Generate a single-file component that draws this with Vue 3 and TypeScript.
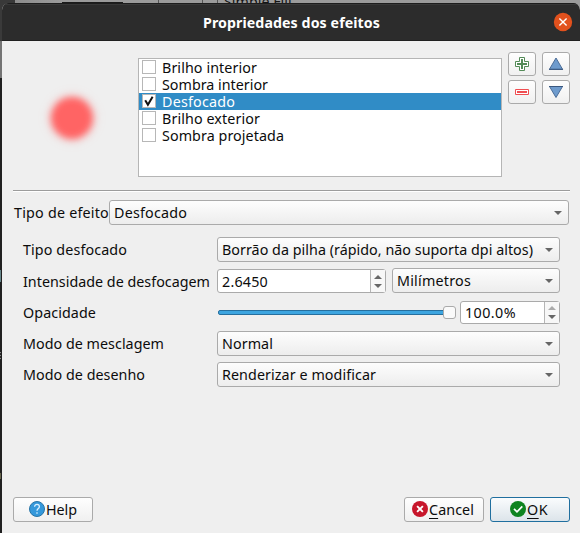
<script setup lang="ts">
import { ref, type Directive } from 'vue'

interface Effect {
  name: string
  width: number
  enabled: boolean
}

const effects = ref<Effect[]>([
  { name: 'Brilho interior', width: 95, enabled: false },
  { name: 'Sombra interior', width: 106, enabled: false },
  { name: 'Desfocado', width: 73, enabled: true },
  { name: 'Brilho exterior', width: 98, enabled: false },
  { name: 'Sombra projetada', width: 122, enabled: false },
])
const selected = ref(2)

// Tracks a label so that it spans the given number of pixels.
const vFit: Directive<HTMLElement, number> = {
  mounted(el, { value }) {
    const natural = el.getBoundingClientRect().width
    const count = (el.textContent ?? '').trim().length
    el.style.letterSpacing = `${(value - natural) / count}px`
  },
}
</script>

<template>
  <div class="desktop">
    <div class="behind-top">
      <i class="tool"></i><i class="bar"></i><i class="sep s1"></i><i class="sep s2"></i><i class="sep s3"></i>
      <span class="behind-text">Simple Fill</span>
    </div>
    <div class="behind-left"><i class="patch p1"></i><i class="patch p2"></i><i class="patch p3"></i></div>

    <div class="dialog">
      <header class="titlebar">
        <span v-fit="177" class="title">Propriedades dos efeitos</span>
        <svg class="close" width="20" height="20" viewBox="0 0 20 20">
          <circle cx="10" cy="10" r="9.2" fill="#e2511d" />
          <path d="M6.4 6.4l7.2 7.2M13.6 6.4l-7.2 7.2" stroke="#fff" stroke-width="1.4" />
        </svg>
      </header>

      <main class="content">
        <section class="top">
          <div class="preview"><div class="dot"></div></div>
          <ul class="list">
            <li v-for="(e, i) in effects" :key="e.name" :class="{ selected: i === selected }" @click="selected = i">
              <span class="check">
                <svg v-if="e.enabled" width="12" height="12" viewBox="0 0 12 12">
                  <path d="M2.2 5.2L4.9 9.8L9.6 1.8" fill="none" stroke="#111" stroke-width="2" />
                </svg>
              </span>
              <span v-fit="e.width">{{ e.name }}</span>
            </li>
          </ul>
          <div class="tools">
            <button class="btn">
              <svg width="16" height="16" viewBox="0 0 16 16">
                <path d="M5.5 1.5h5v4h4v5h-4v4h-5v-4h-4v-5h4z" fill="#fff" stroke="#538b57" />
                <path d="M7 3h2v4h4v2H9v4H7V9H3V7h4z" fill="#538b57" />
              </svg>
            </button>
            <button class="btn">
              <svg width="16" height="16" viewBox="0 0 16 16">
                <path d="M8 2L14.5 13.2H1.5z" fill="#6e9bcd" stroke="#4b6d98" />
                <path d="M1 13.4h14" stroke="#39577f" />
              </svg>
            </button>
            <button class="btn">
              <svg width="16" height="16" viewBox="0 0 16 16">
                <path d="M1.5 5.5h13v5h-13z" fill="#fff" stroke="#f04e52" />
                <path d="M3 7h10v2H3z" fill="#f04e52" />
              </svg>
            </button>
            <button class="btn">
              <svg width="16" height="16" viewBox="0 0 16 16">
                <path d="M8 13.5L1.5 2.5H14.5z" fill="#6e9bcd" stroke="#4b6d98" />
                <path d="M1 2.5h14" stroke="#39577f" />
              </svg>
            </button>
          </div>
        </section>

        <div class="rule"></div>

        <div class="type-row">
          <div class="type-label"><span v-fit="95">Tipo de efeito</span></div>
          <div class="combo"><span v-fit="73">Desfocado</span><i class="arrow"></i></div>
        </div>

        <section class="form">
          <div class="row r1">
            <label><span v-fit="104">Tipo desfocado</span></label>
            <div class="combo"><span v-fit="311">Borrão da pilha (rápido, não suporta dpi altos)</span><i class="arrow"></i></div>
          </div>
          <div class="row r2">
            <label><span v-fit="187">Intensidade de desfocagem</span></label>
            <div class="spin wide">
              <span v-fit="46">2.6450</span>
              <div class="steps"><i class="up"></i><i class="down"></i></div>
            </div>
            <div class="combo"><span v-fit="74">Milímetros</span><i class="arrow"></i></div>
          </div>
          <div class="row r3">
            <label><span v-fit="73">Opacidade</span></label>
            <div class="slider"><div class="track"></div><div class="handle"></div></div>
            <div class="spin small">
              <span v-fit="51">100.0%</span>
              <div class="steps"><i class="up off"></i><i class="down"></i></div>
            </div>
          </div>
          <div class="row r4">
            <label><span v-fit="141">Modo de mesclagem</span></label>
            <div class="combo"><span v-fit="51">Normal</span><i class="arrow"></i></div>
          </div>
          <div class="row r5">
            <label><span v-fit="122">Modo de desenho</span></label>
            <div class="combo"><span v-fit="154">Renderizar e modificar</span><i class="arrow"></i></div>
          </div>
        </section>

        <footer class="footer">
          <button class="btn text help">
            <svg width="16" height="16" viewBox="0 0 16 16">
              <circle cx="8" cy="8" r="7.5" fill="#3498db" stroke="#2874a6" />
              <path d="M5.6 5.8C5.6 2.6 10.4 2.8 10.4 5.7C10.4 7.5 8 7.5 8 9.8M8 11.2v1.6" fill="none" stroke="#d9f0ff" stroke-width="1.3" />
            </svg>
            <span v-fit="31">Help</span>
          </button>
          <span class="grow"></span>
          <button class="btn text cancel">
            <svg width="16" height="16" viewBox="0 0 16 16">
              <circle cx="8" cy="8" r="8" fill="#c7162b" />
              <path d="M5.1 5.1l5.8 5.8M10.9 5.1l-5.8 5.8" stroke="#fff" stroke-width="1.9" />
            </svg>
            <span v-fit="45"><u>C</u>ancel</span>
          </button>
          <button class="btn text ok">
            <svg width="16" height="16" viewBox="0 0 16 16">
              <circle cx="8" cy="8" r="8" fill="#0e8420" />
              <path d="M4 7.8l3 3L12.3 5.4" fill="none" stroke="#fff" stroke-width="1.7" />
            </svg>
            <span v-fit="21"><u>O</u>K</span>
          </button>
        </footer>
      </main>
    </div>
  </div>
</template>

<style>
body {
  background: #202020;
  overflow: hidden;
}
</style>

<style scoped>
* {
  box-sizing: border-box;
}
.desktop {
  position: relative;
  width: 580px;
  height: 533px;
  padding: 3px 0 0 2px;
  overflow: hidden;
  background: #1d1d1d;
  color: #0c0c0c;
  font: 14.3px/17px 'Noto Sans', 'Open Sans', sans-serif;
  white-space: nowrap;
}
.behind-top {
  position: absolute;
  left: 0;
  top: 0;
  width: 580px;
  height: 12px;
  overflow: hidden;
  background: linear-gradient(90deg, #888, #9b9b9b 60px);
}
.behind-top i {
  position: absolute;
  top: 0;
  height: 12px;
}
.behind-top .tool { left: 0; width: 15px; background: #393939; }
.behind-top .bar { left: 62px; top: 2px; width: 61px; height: 1px; background: #1b1b1b; }
.sep { width: 1px; background: #555; }
.s1 { left: 158px; }
.s2 { left: 202px; }
.s3 { left: 217px; }
.behind-text {
  position: absolute;
  left: 224px;
  top: -7px;
  line-height: 17px;
  color: #151515;
}
.behind-left {
  position: absolute;
  left: 0;
  top: 9px;
  width: 2px;
  height: 524px;
  background: linear-gradient(#3a3a3a 0 32px, #747474 32px 69px, #202020 69px);
}
.patch { position: absolute; left: 0; width: 1px; }
.p1 { top: 261px; height: 12px; background: #66868a; }
.p2 { top: 343px; height: 8px; background: repeating-linear-gradient(#888 0 1px, #292929 1px 3px); }
.p3 { top: 464px; height: 6px; background: #68664d; }

.dialog {
  position: relative;
  width: 578px;
  height: 530px;
  background: #efefef;
  border-radius: 7px 7px 0 0;
  overflow: hidden;
}
.titlebar {
  position: relative;
  display: flex;
  align-items: center;
  height: 38px;
  padding: 1px 7px 0 201px;
  background: #2c2c2c;
  border-top: 1px solid #1d1d1d;
  border-bottom: 1px solid #202020;
  box-shadow: inset 0 1px #383838;
}
.title {
  color: #fff;
  font-size: 14.2px;
  font-weight: 700;
}
.close { position: relative; top: -1px; margin-left: auto; }
.content {
  display: flex;
  flex-direction: column;
  height: 492px;
  padding: 11px 10px 11px 11px;
}
.top { display: flex; height: 125px; }
.preview {
  display: flex;
  width: 125px;
  padding: 45px 0 0 38px;
}
.dot {
  width: 42px;
  height: 42px;
  border-radius: 50%;
  background: #ff6464;
  box-shadow: 0 0 9px rgba(255, 130, 130, 0.45);
  filter: blur(3.5px);
}
.list {
  width: 364px;
  height: 119px;
  margin: 6px 6px 0 0;
  padding: 0;
  list-style: none;
  background: #fff;
  border: 1px solid #b5b5b5;
}
.list li {
  display: flex;
  align-items: center;
  gap: 6px;
  height: 17px;
  padding-left: 3px;
}
.list li.selected { background: #308cc6; color: #fff; }
.check {
  display: flex;
  width: 14px;
  height: 14px;
  margin-top: -1px;
  border: 1px solid #b7b7b7;
  background: #fff;
}
.tools {
  display: grid;
  grid-template-columns: 28px 28px;
  grid-template-rows: 24px 24px;
  gap: 4px 6px;
}
.btn {
  display: flex;
  align-items: center;
  justify-content: center;
  padding: 0;
  border: 1px solid #aaa;
  border-radius: 3px;
  background: linear-gradient(#fefefe, #f0f0f0);
  color: inherit;
  font: inherit;
}
.rule {
  height: 2px;
  margin-top: 13px;
  background: #9c9c9c;
  border-bottom: 1px solid #fff;
}
.type-row {
  display: flex;
  align-items: center;
  margin-top: 8px;
  padding-right: 1px;
}
.type-label { width: 96px; padding-left: 1px; }
.combo {
  display: flex;
  align-items: center;
  flex: 1;
  height: 25px;
  padding: 0 6px 0 4px;
  border: 1px solid #aaa;
  border-radius: 3px;
  background: linear-gradient(#fdfdfd, #ededed);
}
.arrow {
  margin-left: auto;
  border: 4px solid transparent;
  border-top-color: #666;
  border-bottom: 0;
}
.form {
  display: flex;
  flex-direction: column;
  gap: 6px;
  padding: 12px 10px 0;
}
.row { display: flex; align-items: center; height: 25px; }
.row label { flex: none; width: 194px; }
.row.r3 { height: 26px; }
.row.r2 label { padding-top: 1px; }
.spin {
  display: flex;
  align-items: center;
  justify-content: space-between;
  padding-left: 4px;
  border: 1px solid #aaa;
  border-radius: 3px;
  background: #fff;
}
.wide { width: 169px; height: 24px; margin: 1px 6px 0 0; }
.small { width: 100px; height: 23px; margin-top: 1px; }
.steps {
  display: flex;
  flex-direction: column;
  align-items: center;
  justify-content: center;
  gap: 5px;
  width: 15px;
  height: 100%;
  background: #f7f7f7;
  border-left: 1px solid #b5b5b5;
}
.steps i { border: 4px solid transparent; }
.steps .up { border-bottom-color: #666; border-top: 0; }
.steps .up.off { border-bottom-color: #aaa; }
.steps .down { border-top-color: #666; border-bottom: 0; }
.slider {
  display: flex;
  align-items: center;
  flex: 1;
  height: 23px;
  padding-left: 1px;
  margin-right: 4px;
}
.track {
  flex: 1;
  height: 5px;
  margin-right: -2px;
  border: 1px solid #266f9e;
  border-radius: 2px;
  background: #3da5e0;
}
.handle {
  z-index: 1;
  width: 13px;
  height: 13px;
  border: 1px solid #aaa;
  border-radius: 3px;
  background: #fafafa;
}
.footer { display: flex; margin-top: auto; }
.grow { flex: 1; }
.btn.text { width: 80px; height: 25px; gap: 1px; }
.btn.cancel { margin-right: 6px; }
.btn.cancel svg, .btn.ok svg { margin-left: -2px; }
.btn.text svg { margin-top: -1px; }
.btn.ok {
  border-color: #206f9f;
  background: linear-gradient(#fafcfd, #dce4ea);
}
u { text-underline-offset: 3px; text-decoration-thickness: 1px; }
</style>
